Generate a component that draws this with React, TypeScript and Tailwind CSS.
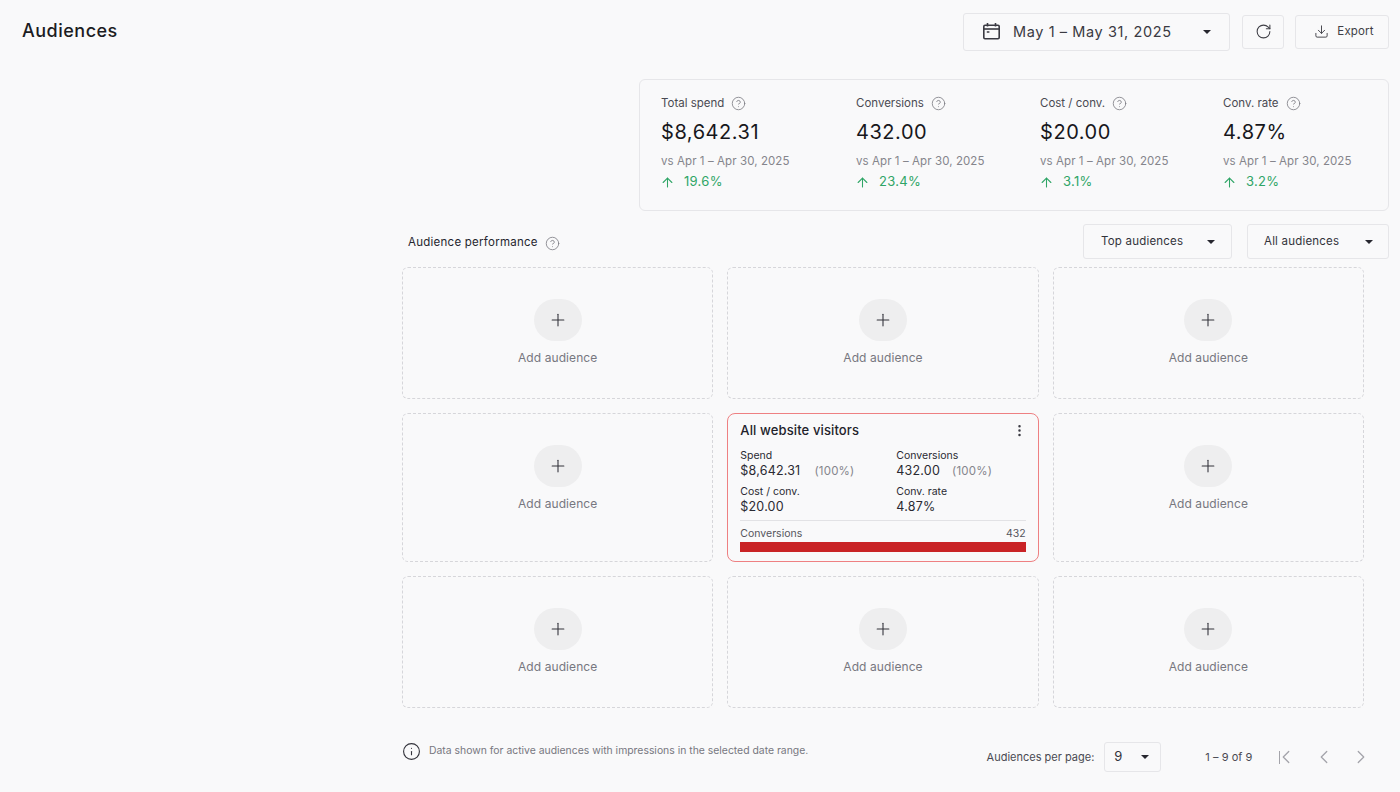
import { RotateCw, Download, CircleHelp, ArrowUp, Plus, EllipsisVertical, Info, ChevronLeft, ChevronRight } from "lucide-react";

function Caret() {
  return (
    <svg width="8" height="4" viewBox="0 0 8 4" className="shrink-0">
      <path d="M0 0h8L4 4z" fill="#27272f" />
    </svg>
  );
}

function CalendarIcon() {
  return (
    <svg width="19" height="19" viewBox="0 0 19 19" fill="none" className="shrink-0">
      <rect x="1.8" y="3.2" width="15.4" height="13.6" rx="1.2" stroke="#3a3a42" strokeWidth="1.6" />
      <path d="M1.8 7h15.4" stroke="#3a3a42" strokeWidth="1.6" />
      <path d="M5.5 1v3.4M13.5 1v3.4" stroke="#3a3a42" strokeWidth="1.6" />
      <path d="M4.8 10h2.6" stroke="#3a3a42" strokeWidth="1.5" />
    </svg>
  );
}

const stats = [
  { label: "Total spend", value: "$8,642.31", delta: "19.6%", w: "w-[195px]" },
  { label: "Conversions", value: "432.00", delta: "23.4%", w: "w-[184px]" },
  { label: "Cost / conv.", value: "$20.00", delta: "3.1%", w: "w-[183px]" },
  { label: "Conv. rate", value: "4.87%", delta: "3.2%", w: "w-[150px]" },
];

function Stat({ s }: { s: (typeof stats)[number] }) {
  return (
    <div className={`${s.w} shrink-0`}>
      <div className="flex items-center gap-[7px] h-[16px] text-[11.5px] text-[#4a4a52]">
        {s.label}
        <CircleHelp size={15} strokeWidth={1.3} className="text-[#7b7b82] -mt-[1px]" />
      </div>
      <div className="mt-[8px] h-[24px] leading-[24px] text-[20px] text-[#17171c] tracking-[0.55px]">{s.value}</div>
      <div className="mt-[9px] h-[16px] leading-[16px] text-[11.5px] text-[#85858c] tracking-[0.08px]">vs Apr 1 – Apr 30, 2025</div>
      <div className="mt-[5px] flex items-center gap-[9px] h-[16px] text-[13px] text-[#2fa566] tracking-[0.3px]">
        <ArrowUp size={15} strokeWidth={1.7} className="-ml-[1px]" />
        {s.delta}
      </div>
    </div>
  );
}

function AddCard({ tall }: { tall?: boolean }) {
  return (
    <div className={`${tall ? "h-[149px] pb-[19px]" : "h-[132px] pb-[2px]"} border border-dashed border-[#d6d6da] rounded-[6px] flex flex-col items-center justify-center`}>
      <div className="w-[48px] h-[42px] rounded-full bg-[#eeeeef] flex items-center justify-center">
        <Plus size={20} strokeWidth={1.3} className="text-[#33333b]" />
      </div>
      <div className="mt-[8px] pt-[1px] text-[12px] leading-[16px] text-[#77777f] tracking-[0.08px]">Add audience</div>
    </div>
  );
}

function VisitorCard() {
  return (
    <div className="h-[149px] border border-[#ee8082] rounded-[8px] px-[12px] pt-[7px]">
      <div className="flex items-center justify-between h-[20px]">
        <span className="text-[13px] font-medium text-[#22222a] tracking-[0.12px]">All website visitors</span>
        <EllipsisVertical size={15} strokeWidth={2} className="text-[#3a3a42] -mt-[1px] -mr-[1px]" />
      </div>
      <div className="mt-[8px] grid grid-cols-[156px_1fr] text-[#2a2a32]">
        <div>
          <div className="text-[10.5px] leading-[14px]">Spend</div>
          <div className="text-[12.5px] leading-[16px] tracking-[0.2px]">
            $8,642.31<span className="ml-[14px] text-[11.5px] text-[#85858c]">(100%)</span>
          </div>
        </div>
        <div>
          <div className="text-[10.5px] leading-[14px]">Conversions</div>
          <div className="text-[12.5px] leading-[16px] tracking-[0.2px]">
            432.00<span className="ml-[12px] text-[11.5px] text-[#85858c]">(100%)</span>
          </div>
        </div>
        <div className="mt-[6px]">
          <div className="text-[10.5px] leading-[14px]">Cost / conv.</div>
          <div className="text-[12.5px] leading-[16px] tracking-[0.2px]">$20.00</div>
        </div>
        <div className="mt-[6px]">
          <div className="text-[10.5px] leading-[14px]">Conv. rate</div>
          <div className="text-[12.5px] leading-[16px] tracking-[0.2px]">4.87%</div>
        </div>
      </div>
      <div className="mt-[5px] border-t border-[#e2e2e5] pt-[6px] flex justify-between text-[10.5px] leading-[14px] text-[#55555c]">
        <span>Conversions</span>
        <span>432</span>
      </div>
      <div className="mt-[1px] h-[10px] bg-[#c92326]" />
    </div>
  );
}

export default function App() {
  return (
    <div className="w-[1400px] h-[792px] overflow-hidden bg-[#f9f9fa] font-['Inter',sans-serif]">
      <header className="flex items-center pl-[22px] pt-[12px] h-[51px]">
        <h1 className="text-[18px] font-medium text-[#1c1c22] flex-1 -mt-[3px] tracking-[0.5px]">Audiences</h1>
        <button className="w-[267px] h-[38px] border border-[#e6e6e9] rounded-[3px] flex items-center pl-[18px] pr-[18px] text-[#3a3a42]">
          <CalendarIcon />
          <span className="ml-[12px] flex-1 text-left text-[14.5px] tracking-[0.6px]">May 1 – May 31, 2025</span>
          <Caret />
        </button>
        <button className="ml-[12px] w-[42px] h-[34px] border border-[#e6e6e9] rounded-[3px] flex items-center justify-center text-[#3f3f46]">
          <RotateCw size={17} strokeWidth={1.5} />
        </button>
        <button className="ml-[11px] mr-[11px] w-[94px] h-[34px] border border-[#e6e6e9] rounded-[3px] flex items-center justify-center gap-[8px] pl-[4px] text-[11.5px] tracking-[0.15px] text-[#3f3f46]">
          <Download size={15} strokeWidth={1.5} />
          Export
        </button>
      </header>

      <section className="ml-[639px] mt-[28px] w-[750px] h-[132px] border border-[#e6e6e9] rounded-[6px] pl-[21px] pt-[16px] flex">
        {stats.map((s) => (
          <Stat key={s.label} s={s} />
        ))}
      </section>

      <div className="ml-[403px] mr-[11px] mt-[13px] h-[35px] flex items-center">
        <div className="flex-1 flex items-center gap-[7px] pl-[5px] text-[11.5px] tracking-[0.25px] text-[#26262e] pt-[3px]">
          Audience performance
          <CircleHelp size={15} strokeWidth={1.3} className="text-[#7b7b82]" />
        </div>
        <button className="w-[149px] h-[35px] border border-[#e6e6e9] rounded-[3px] flex items-center justify-between pl-[17px] pr-[16px] text-[11.5px] tracking-[0.2px] text-[#33333b]">
          Top audiences
          <Caret />
        </button>
        <button className="ml-[15px] w-[142px] h-[35px] border border-[#e6e6e9] rounded-[3px] flex items-center justify-between pl-[16px] pr-[15px] text-[11.5px] tracking-[0.2px] text-[#33333b]">
          All audiences
          <Caret />
        </button>
      </div>

      <main className="ml-[402px] mt-[8px] w-[962px] grid grid-cols-3 gap-x-[14px] gap-y-[14px]">
        <AddCard />
        <AddCard />
        <AddCard />
        <AddCard tall />
        <VisitorCard />
        <AddCard tall />
        <AddCard />
        <AddCard />
        <AddCard />
      </main>

      <footer className="ml-[402px] mt-[34px] h-[30px] flex items-center">
        <Info size={19} strokeWidth={1.4} className="text-[#33333b] -mt-[12px]" />
        <span className="ml-[8px] flex-1 text-[10.4px] text-[#77777f] -mt-[12px]">
          Data shown for active audiences with impressions in the selected date range.
        </span>
        <span className="text-[11px] text-[#4a4a52]">Audiences per page:</span>
        <button className="ml-[10px] w-[57px] h-[30px] border border-[#e6e6e9] rounded-[3px] flex items-center justify-between pl-[9px] pr-[11px] text-[13px] text-[#33333b]">
          9
          <Caret />
        </button>
        <span className="ml-[44px] text-[11px] tracking-[0.05px] text-[#4a4a52]">1 – 9 of 9</span>
        <div className="ml-[26px] mr-[28px] flex items-center gap-[15.5px] text-[#a4a4aa]">
          <span className="flex items-center">
            <span className="w-[1.5px] h-[13px] bg-[#a4a4aa] mr-[-5px]" />
            <ChevronLeft size={22} strokeWidth={1.4} />
          </span>
          <ChevronLeft size={22} strokeWidth={1.4} />
          <ChevronRight size={22} strokeWidth={1.4} />
        </div>
      </footer>
    </div>
  );
}
